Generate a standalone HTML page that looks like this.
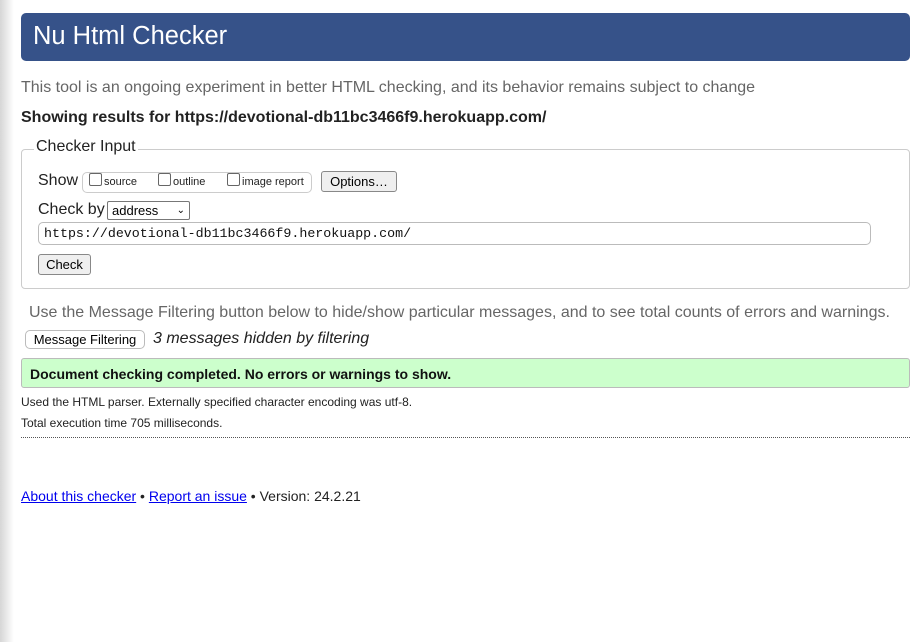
<!DOCTYPE html>
<html><head><meta charset="utf-8"><style>
body{margin:0;width:923px;height:642px;background:#fff;font-family:"Liberation Sans",Arial,sans-serif;position:relative;overflow:hidden}
.shade{position:absolute;left:0;top:0;width:14px;height:642px;background:linear-gradient(to right,#d6d6d6,#f3f3f3 70%,#fff)}
.a{position:absolute;white-space:nowrap}
.hdr{left:21px;top:13px;width:889px;height:48px;background:#365289;border-radius:5px}
.hdr span{position:absolute;left:12px;top:9px;color:#fff;font-size:25.5px}
.fs{left:21px;top:149px;width:887px;height:138px;border:1px solid #ccc;border-radius:4px}
.btn{position:absolute;border:1px solid #888;border-radius:3px;background:#efefef;font-size:13px;text-align:center;box-sizing:border-box}
.cb{display:inline-block;width:11px;height:11px;border:1px solid #666;border-radius:2px;vertical-align:-1px;margin-right:2px}
</style></head><body>
<div class="shade"></div>
<div class="a hdr"><span>Nu Html Checker</span></div>
<div class="a" style="left:21px;top:79px;font-size:16px;color:#666">This tool is an ongoing experiment in better HTML checking, and its behavior remains subject to change</div>
<div class="a" style="left:21px;top:109px;font-size:16px;font-weight:bold;color:#222">Showing results for https://devotional-db11bc3466f9.herokuapp.com/</div>
<div class="a fs"></div>
<div class="a" style="left:34px;top:138px;background:#fff;padding:0 2px;font-size:16px;color:#222">Checker Input</div>
<div class="a" style="left:38px;top:172px;font-size:16px;color:#222">Show</div>
<div class="a" style="left:82px;top:172px;width:228px;height:19px;border:1px solid #ccc;border-radius:5px;font-size:11px;color:#222;line-height:19px">
<span style="position:absolute;left:6px"><span class="cb"></span>source</span>
<span style="position:absolute;left:75px"><span class="cb"></span>outline</span>
<span style="position:absolute;left:144px"><span class="cb"></span>image report</span></div>
<div class="btn" style="left:321px;top:171px;width:76px;height:21px;line-height:19px">Options…</div>
<div class="a" style="left:38px;top:201px;font-size:16px;color:#222">Check by</div>
<div class="a" style="left:107px;top:201px;width:77px;height:17px;border:1px solid #777;border-radius:2px;font-size:13px;line-height:17px;padding-left:4px;box-sizing:content-box">address<span style="position:absolute;right:4px;font-size:10px">&#x2304;</span></div>
<div class="a" style="left:38px;top:222px;width:833px;height:23px;border:1px solid #bbb;border-radius:5px;font-family:'Liberation Mono',monospace;font-size:13.3px;line-height:22px;padding-left:5px;box-sizing:border-box;color:#111">https://devotional-db11bc3466f9.herokuapp.com/</div>
<div class="btn" style="left:38px;top:254px;width:53px;height:21px;line-height:19px">Check</div>
<div class="a" style="left:29px;top:304px;font-size:16px;color:#666">Use the Message Filtering button below to hide/show particular messages, and to see total counts of errors and warnings.</div>
<div class="btn" style="left:25px;top:330px;width:120px;height:19px;line-height:17px;border-color:#bbb;border-radius:5px;background:#fff">Message Filtering</div>
<div class="a" style="left:153px;top:330px;font-size:16px;font-style:italic;color:#222">3 messages hidden by filtering</div>
<div class="a" style="left:21px;top:358px;width:887px;height:28px;background:#ccffcc;border:1px solid #bbb;border-radius:3px"><span style="position:absolute;left:8px;top:7px;font-size:14px;font-weight:bold;color:#111">Document checking completed. No errors or warnings to show.</span></div>
<div class="a" style="left:21px;top:395px;font-size:12px;color:#222">Used the HTML parser. Externally specified character encoding was utf-8.</div>
<div class="a" style="left:21px;top:416px;font-size:12px;color:#222">Total execution time 705 milliseconds.</div>
<div class="a" style="left:21px;top:437px;width:889px;border-top:1px dotted #555"></div>
<div class="a" style="left:21px;top:488px;font-size:14px;color:#222"><span style="color:#00e;text-decoration:underline">About this checker</span> • <span style="color:#00e;text-decoration:underline">Report an issue</span> • Version: 24.2.21</div>
</body></html>
